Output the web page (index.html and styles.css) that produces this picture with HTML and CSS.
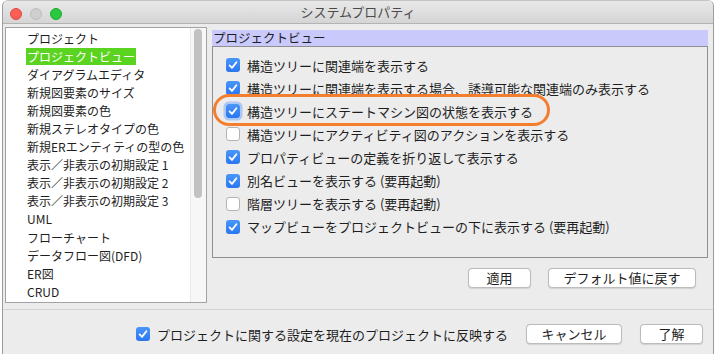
FILE: index.html
```html
<!DOCTYPE html>
<html lang="ja">
<head>
<meta charset="utf-8">
<title>システムプロパティ</title>
<link rel="stylesheet" href="styles.css">
</head>
<body>
<div class="window">
  <div class="titlebar">
    <div class="lights">
      <span class="light red"></span>
      <span class="light grey"></span>
      <span class="light green"></span>
    </div>
    <div class="title">システムプロパティ</div>
    <div></div>
  </div>
  <div class="main">
    <div class="list">
      <ul class="items">
        <li><span class="lbl">プロジェクト</span></li>
        <li><span class="lbl sel">プロジェクトビュー</span></li>
        <li><span class="lbl">ダイアグラムエディタ</span></li>
        <li><span class="lbl">新規図要素のサイズ</span></li>
        <li><span class="lbl">新規図要素の色</span></li>
        <li><span class="lbl">新規ステレオタイプの色</span></li>
        <li><span class="lbl">新規ERエンティティの型の色</span></li>
        <li><span class="lbl">表示／非表示の初期設定 1</span></li>
        <li><span class="lbl">表示／非表示の初期設定 2</span></li>
        <li><span class="lbl">表示／非表示の初期設定 3</span></li>
        <li><span class="lbl">UML</span></li>
        <li><span class="lbl">フローチャート</span></li>
        <li><span class="lbl">データフロー図(DFD)</span></li>
        <li><span class="lbl">ER図</span></li>
        <li><span class="lbl">CRUD</span></li>
      </ul>
      <div class="scroll"><div class="thumb"></div></div>
    </div>
    <div class="right">
      <div class="header">プロジェクトビュー</div>
      <div class="box">
        <div class="row"><span class="cb on"><svg viewBox="0 0 14 14"><path d="M3.6 7.4 L6 9.9 L10.4 4.2"/></svg></span><span>構造ツリーに関連端を表示する</span></div>
        <div class="row"><span class="cb on"><svg viewBox="0 0 14 14"><path d="M3.6 7.4 L6 9.9 L10.4 4.2"/></svg></span><span>構造ツリーに関連端を表示する場合、誘導可能な関連端のみ表示する</span></div>
        <div class="row"><span class="cb on focus"><svg viewBox="0 0 14 14"><path d="M3.6 7.4 L6 9.9 L10.4 4.2"/></svg></span><span>構造ツリーにステートマシン図の状態を表示する</span></div>
        <div class="row"><span class="cb"></span><span>構造ツリーにアクティビティ図のアクションを表示する</span></div>
        <div class="row"><span class="cb on"><svg viewBox="0 0 14 14"><path d="M3.6 7.4 L6 9.9 L10.4 4.2"/></svg></span><span>プロパティビューの定義を折り返して表示する</span></div>
        <div class="row"><span class="cb on"><svg viewBox="0 0 14 14"><path d="M3.6 7.4 L6 9.9 L10.4 4.2"/></svg></span><span>別名ビューを表示する (要再起動)</span></div>
        <div class="row"><span class="cb"></span><span>階層ツリーを表示する (要再起動)</span></div>
        <div class="row"><span class="cb on"><svg viewBox="0 0 14 14"><path d="M3.6 7.4 L6 9.9 L10.4 4.2"/></svg></span><span>マップビューをプロジェクトビューの下に表示する (要再起動)</span></div>
        <div class="ring"></div>
      </div>
      <div class="actions">
        <button class="btn w63">適用</button>
        <button class="btn w148">デフォルト値に戻す</button>
      </div>
    </div>
  </div>
  <div class="sep"></div>
  <div class="footer">
    <div class="flabel"><span class="cb on"><svg viewBox="0 0 14 14"><path d="M3.6 7.4 L6 9.9 L10.4 4.2"/></svg></span><span>プロジェクトに関する設定を現在のプロジェクトに反映する</span></div>
    <button class="btn w96">キャンセル</button>
    <button class="btn w63">了解</button>
  </div>
</div>
</body>
</html>
```
FILE: styles.css
```css
html, body {
  margin: 0;
  padding: 0;
}
body {
  width: 715px;
  height: 354px;
  overflow: hidden;
  background: #ffffff;
  font-family: "Noto Sans CJK JP", "Noto Sans", sans-serif;
  color: #1e1e1e;
}
.window {
  box-sizing: border-box;
  margin-left: 2px;
  width: 712px;
  height: 354px;
  border-left: 1px solid #9c9c9c;
  border-right: 1px solid #9c9c9c;
  border-top: 1px solid #c4c4c4;
  border-radius: 6px 6px 0 0;
  background: #ececec;
  overflow: hidden;
}
.titlebar {
  height: 22px;
  border-bottom: 1px solid #b3b3b3;
  background: linear-gradient(#e8e8e8, #d5d5d5);
  display: grid;
  grid-template-columns: 1fr auto 1fr;
  align-items: start;
}
.lights {
  display: flex;
  gap: 8px;
  padding: 7px 0 0 7px;
}
.light {
  width: 12px;
  height: 12px;
  border-radius: 50%;
  box-sizing: border-box;
}
.red { background: #fd5f57; border: 1px solid #e0443e; }
.grey { background: #cfcfcf; border: 1px solid #bdbdbd; }
.green { background: #28c840; border: 1px solid #1daa2f; }
.title {
  font-size: 13px;
  line-height: 22px;
  color: #4a4a4a;
}
.main {
  display: flex;
  align-items: flex-start;
  padding: 3px 0 0 2px;
}
.list {
  box-sizing: border-box;
  width: 202px;
  height: 276px;
  border: 1px solid #a3a3a3;
  background: #ffffff;
  display: flex;
}
.items {
  flex: 1;
  list-style: none;
  margin: 0;
  padding: 1.5px 0 0 20px;
}
.items li {
  height: 18.1px;
  font-size: 12px;
  line-height: 17.5px;
}
.lbl {
  display: inline-block;
  padding: 0 1px;
  height: 17.5px;
}
.lbl.sel {
  background: #5bd321;
  color: #ffffff;
}
.scroll {
  width: 15px;
  background: #f7f7f7;
  border-left: 1px solid #e9e9e9;
}
.thumb {
  margin: 1px 0 0 3px;
  width: 8px;
  height: 169px;
  border-radius: 4px;
  background: #c2c2c2;
}
.right {
  margin-left: 5px;
  width: 496px;
  padding-top: 3px;
}
.header {
  height: 16px;
  background: #c9c9fc;
  font-size: 12.5px;
  line-height: 16px;
  padding-left: 1px;
}
.box {
  position: relative;
  box-sizing: border-box;
  height: 212px;
  border: 1px solid #8f8f8f;
  padding-top: 6.5px;
}
.row {
  height: 23.1px;
  display: flex;
  align-items: center;
  gap: 7px;
  padding-left: 13px;
  font-size: 13px;
  white-space: nowrap;
}
.cb {
  flex: none;
  box-sizing: border-box;
  width: 14px;
  height: 14px;
  border-radius: 3px;
  background: #ffffff;
  border: 1px solid #b4b4b4;
  display: inline-flex;
}
.cb.on {
  border: none;
  background: linear-gradient(#4a97f8, #2a76f2);
}
.cb.focus {
  box-shadow: 0 0 0 2.5px rgba(110, 165, 250, 0.5);
}
.cb svg {
  width: 14px;
  height: 14px;
}
.cb svg path {
  fill: none;
  stroke: #ffffff;
  stroke-width: 1.8;
  stroke-linecap: round;
  stroke-linejoin: round;
}
.ring {
  position: absolute;
  left: -0.5px;
  top: 46.5px;
  box-sizing: border-box;
  width: 337px;
  height: 32px;
  border: 3.3px solid #f47e2e;
  border-radius: 16px;
}
.actions {
  display: flex;
  justify-content: flex-end;
  gap: 17px;
  margin-top: 10px;
  padding-right: 12px;
}
.btn {
  box-sizing: border-box;
  height: 20px;
  padding: 0;
  border: 1px solid #bcbcbc;
  border-radius: 4px;
  background: #ffffff;
  box-shadow: 0 0.5px 1px rgba(0, 0, 0, 0.12);
  font-family: "Noto Sans CJK JP", "Noto Sans", sans-serif;
  font-size: 13px;
  line-height: 18px;
  color: #1e1e1e;
}
.w63 { width: 63px; }
.w96 { width: 96px; }
.w148 { width: 148px; }
.sep {
  margin-top: 6px;
  height: 1px;
  background: #d4d4d4;
}
.footer {
  display: flex;
  justify-content: flex-end;
  align-items: center;
  gap: 18px;
  margin-top: 14px;
  padding-right: 10px;
}
.flabel {
  display: flex;
  align-items: center;
  gap: 7px;
  font-size: 13px;
  white-space: nowrap;
}
```
